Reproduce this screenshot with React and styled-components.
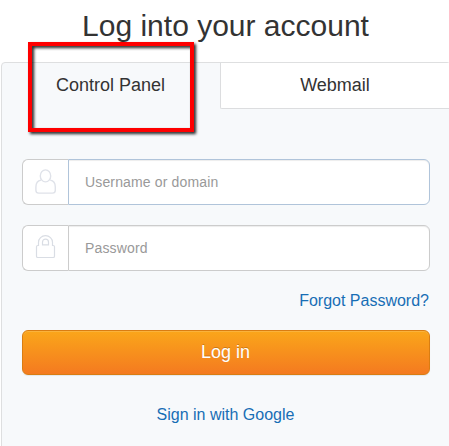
import React from "react";
import styled, { createGlobalStyle } from "styled-components";

const GlobalStyle = createGlobalStyle`
  *, *::before, *::after { box-sizing: border-box; }
  html, body { margin: 0; overflow: hidden; background: #fff; }
  body { font-family: "Liberation Sans", Arial, sans-serif; color: #333; }
`;

const Page = styled.main`
  height: 446px;
  width: 449px;
  overflow: hidden;
  position: relative;
`;

const Title = styled.h1`
  margin: 0;
  padding-top: 9px;
  width: 451px;
  height: 62px;
  font-size: 30px;
  font-weight: 400;
  line-height: 33px;
  text-align: center;
`;

const Panel = styled.section`
  width: 450px;
  height: 400px;
  margin-left: 1px;
  border: 1px solid #dedfe0;
  border-radius: 4px 4px 0 0;
  background: #f7f9fb;
`;

const Tabs = styled.div`
  display: grid;
  grid-template-columns: 218px 230px;
  height: 46px;
`;

const Tab = styled.button`
  border: 0 solid #dcdddf;
  border-width: ${(p) => (p.$active ? "0" : "0 0 1px 1px")};
  border-bottom-left-radius: ${(p) => (p.$active ? "0" : "2px")};
  background: ${(p) => (p.$active ? "transparent" : "#fff")};
  padding: ${(p) => (p.$active ? "0 1px 2px 0" : "0 1px 1px 0")};
  color: #333;
  font: 18px/42px "Liberation Sans", Arial, sans-serif;
  text-align: center;
`;

const Form = styled.form`
  display: flex;
  flex-direction: column;
  width: 408px;
  margin: 50px 0 0 20px;
`;

const Field = styled.label`
  display: flex;
  height: 46px;
  margin-bottom: 20px;
`;

const IconBox = styled.span`
  display: flex;
  justify-content: center;
  width: 46px;
  padding: 9px 1px 0 0;
  border: 1px solid #ccc;
  border-right: 0;
  border-radius: 6px 0 0 6px;
  background: #fff;
`;

const Input = styled.input`
  flex: 1;
  min-width: 0;
  padding: 0 16px;
  border: 1px solid ${(p) => (p.$highlighted ? "#b0c4da" : "#ccc")};
  border-radius: 0 6px 6px 0;
  outline: 0;
  background: #fff;
  box-shadow: inset 0 1px 1px rgba(0, 0, 0, 0.075);
  font: 14px "Liberation Sans", Arial, sans-serif;
  letter-spacing: 0.15px;
  &::placeholder { color: #999; opacity: 1; }
`;

const Link = styled.a`
  color: #176eb5;
  font-size: 16px;
  line-height: 20px;
  text-decoration: none;
  align-self: ${(p) => p.$align};
  margin-right: 1px;
`;

const Submit = styled.button`
  height: 45px;
  margin: 19px 0 30px;
  padding: 0 1px 1px 0;
  border: 1px solid #d97d12;
  border-radius: 6px;
  background: linear-gradient(#faa61a, #f47a20);
  box-shadow: inset 0 1px 0 rgba(255, 255, 255, 0.15), 0 1px 1px rgba(0, 0, 0, 0.075);
  color: #fff;
  font: 18px "Liberation Sans", Arial, sans-serif;
  text-shadow: 0 -1px 0 rgba(0, 0, 0, 0.2);
`;

const Highlight = styled.div`
  position: absolute;
  left: 28px;
  top: 42px;
  width: 166px;
  height: 90px;
  border: 4px solid #fe0000;
  filter: drop-shadow(2px 2px 1.5px rgba(0, 0, 0, 0.85));
  pointer-events: none;
`;

const UserIcon = () => (
  <svg width="24" height="26" viewBox="0 0 24 26" fill="none" stroke="#dfe2e9" strokeWidth="1.4">
    <ellipse cx="12.5" cy="6.9" rx="5.2" ry="6" />
    <path d="M8 11.1C4.8 11.6 2.9 14.5 2.9 18v3.2c0 2 .9 2.9 2.9 2.9h13.6c2 0 2.9-.9 2.9-2.9V18c0-3.5-1.9-6.4-5.1-6.9" />
  </svg>
);

const LockIcon = () => (
  <svg width="24" height="26" viewBox="0 0 24 26" fill="none" stroke="#d9dde4" strokeWidth="1.2">
    <path d="M5.5 10.5V7.2C5.5 3.6 8.6.7 12.5.7s7 2.9 7 6.5v3.3h.7c.8 0 1.3.5 1.3 1.3v9.4c0 .8-.5 1.3-1.3 1.3H4.8c-.8 0-1.3-.5-1.3-1.3v-9.4c0-.8.5-1.3 1.3-1.3Z" />
    <path d="M9.5 9.9V7.1c0-1.8 1.2-3 3-3s3 1.2 3 3v2.8Z" />
  </svg>
);

export default function App() {
  return (
    <>
      <GlobalStyle />
      <Page>
        <Title>Log into your account</Title>
        <Panel>
          <Tabs>
            <Tab type="button" $active>Control Panel</Tab>
            <Tab type="button">Webmail</Tab>
          </Tabs>
          <Form>
            <Field>
              <IconBox><UserIcon /></IconBox>
              <Input $highlighted placeholder="Username or domain" />
            </Field>
            <Field>
              <IconBox><LockIcon /></IconBox>
              <Input type="password" placeholder="Password" />
            </Field>
            <Link href="#forgot" $align="flex-end">Forgot Password?</Link>
            <Submit type="button">Log in</Submit>
            <Link href="#google" $align="center">Sign in with Google</Link>
          </Form>
        </Panel>
        <Highlight />
      </Page>
    </>
  );
}
